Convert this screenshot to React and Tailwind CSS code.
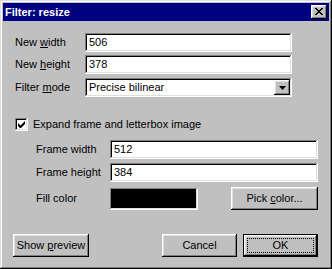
import React from "react";

const raised =
  "shadow-[inset_-1px_-1px_#000,inset_1px_1px_#fff,inset_-2px_-2px_#808080,inset_2px_2px_#dfdfdf]";
const sunken =
  "shadow-[inset_-1px_-1px_#fff,inset_1px_1px_#808080,inset_-2px_-2px_#dfdfdf,inset_2px_2px_#000]";

function Field({ value, className = "" }) {
  return (
    <div className={`h-[19px] bg-white ${sunken} flex items-center pl-[4px] text-black ${className}`}>
      {value}
    </div>
  );
}

function Button({ children, className = "", isDefault = false }) {
  if (isDefault) {
    return (
      <div className={`h-[23px] border border-black bg-[#c0c0c0] ${className}`}>
        <div className={`h-full w-full ${raised} p-[3px]`}>
          <div className="h-full w-full border border-dotted border-black flex items-center justify-center">
            <span>{children}</span>
          </div>
        </div>
      </div>
    );
  }
  return (
    <div className={`h-[23px] bg-[#c0c0c0] ${raised} flex items-center justify-center ${className}`}>
      <span>{children}</span>
    </div>
  );
}

export default function App() {
  return (
    <div
      className={`w-[332px] h-[269px] bg-[#c0c0c0] p-[3px] flex flex-col text-[11px] text-black shadow-[inset_-1px_-1px_#000,inset_1px_1px_#dfdfdf,inset_-2px_-2px_#808080,inset_2px_2px_#fff] font-['Liberation_Sans',Arial,sans-serif] leading-none`}
    >
      <div className="h-[18px] bg-[#000080] flex items-center justify-between pl-[2px] pr-[2px]">
        <span className="text-white font-bold text-[11px]">Filter: resize</span>
        <div className={`w-[16px] h-[14px] bg-[#c0c0c0] ${raised} flex items-center justify-center`}>
          <svg width="8" height="7" viewBox="0 0 8 7" className="mt-[-1px]">
            <path d="M0 0h2v1h1v1h2V1h1V0h2v1H7v1H6v1H5v1h1v1h1v1h1v1H6V6H5V5H3v1H2v1H0V6h1V5h1V4h1V3H2V2H1V1H0z" fill="#000" />
          </svg>
        </div>
      </div>
      <div className="flex-1 flex flex-col pl-[10px] pr-[11px] pt-[12px]">
        <div className="flex items-center">
          <span className="w-[72px] pl-[2px]">New <span className="underline">w</span>idth</span>
          <Field value="506" className="w-[207px]" />
        </div>
        <div className="flex items-center mt-[3px]">
          <span className="w-[72px] pl-[2px]">New <span className="underline">h</span>eight</span>
          <Field value="378" className="w-[207px]" />
        </div>
        <div className="flex items-center mt-[4px]">
          <span className="w-[72px] pl-[2px]">Filter <span className="underline">m</span>ode</span>
          <div className={`w-[207px] h-[19px] bg-white ${sunken} flex items-center pl-[4px] pr-[2px]`}>
            <span className="flex-1">Precise bilinear</span>
            <div className={`w-[16px] h-[15px] bg-[#c0c0c0] ${raised} flex items-center justify-center`}>
              <svg width="7" height="4" viewBox="0 0 7 4">
                <path d="M0 0h7L3.5 4z" fill="#000" />
              </svg>
            </div>
          </div>
        </div>
        <div className="flex items-center mt-[21px] pl-[2px]">
          <div className={`w-[13px] h-[13px] bg-white ${sunken} flex items-center justify-center`}>
            <svg width="7" height="7" viewBox="0 0 7 7">
              <path d="M0 2v3l2 2h1l4-4V0L2.5 4.5z" fill="#000" />
            </svg>
          </div>
          <span className="ml-[5px]">Expand frame and letterbox image</span>
        </div>
        <div className="flex items-center mt-[9px]">
          <span className="w-[97px] pl-[23px]">Frame width</span>
          <Field value="512" className="w-[208px]" />
        </div>
        <div className="flex items-center mt-[4px]">
          <span className="w-[97px] pl-[23px]">Frame height</span>
          <Field value="384" className="w-[208px]" />
        </div>
        <div className="flex items-center mt-[5px]">
          <span className="w-[97px] pl-[23px]">Fill color</span>
          <div className={`w-[88px] h-[22px] bg-black ${sunken}`} />
          <div className="flex-1" />
          <Button className="w-[87px]">
            Pick <span className="underline">c</span>olor...
          </Button>
        </div>
        <div className="flex items-center mt-[24px]">
          <Button className="w-[76px]">
            Show <span className="underline">p</span>review
          </Button>
          <div className="flex-1" />
          <Button className="w-[75px]">Cancel</Button>
          <Button className="w-[75px] ml-[6px]" isDefault>
            OK
          </Button>
        </div>
      </div>
    </div>
  );
}
